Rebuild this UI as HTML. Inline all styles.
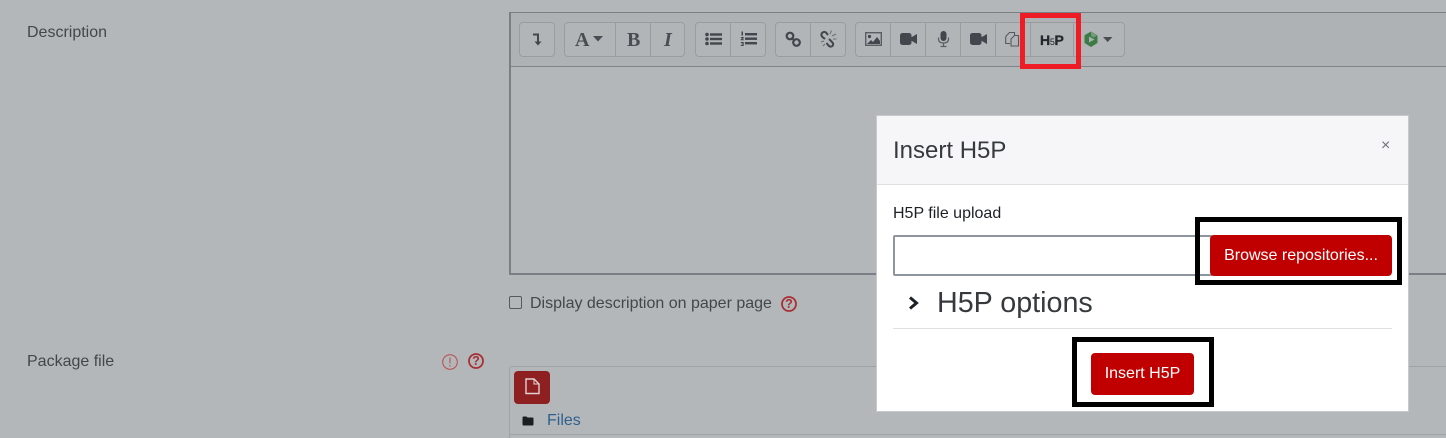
<!DOCTYPE html>
<html><head><meta charset="utf-8">
<style>
html,body{margin:0;padding:0;width:1446px;height:438px;overflow:hidden}
#w{position:relative;width:1446px;height:438px;overflow:hidden;background:#b3b7ba;font-family:"Liberation Sans",sans-serif;color:#3f4245;font-size:16px}
.a{position:absolute;box-sizing:border-box}
.t{position:absolute;white-space:nowrap;line-height:20px}
.g{position:absolute;top:22px;height:35px;box-sizing:border-box;border:1px solid #999da0;border-radius:4px;background:#b1b5b8}
.d{position:absolute;top:22px;width:1px;height:35px;background:#999da0}
svg{position:absolute;overflow:visible}
.btn{position:absolute;background:#c00000;color:#fff;border-radius:4px;text-align:center;box-sizing:border-box}
</style></head><body><div id="w">

<div class="t" style="left:27px;top:23px;color:#44474a">Description</div>
<div class="t" style="left:27px;top:352px;color:#44474a">Package file</div>

<!-- editor -->
<div class="a" style="left:509px;top:12px;width:940px;height:263px;border:1px solid #7a7e85;border-left:2px solid #7a7e85;border-bottom:2px solid #7a7e85;background:#b3b7ba"></div>
<div class="a" style="left:511px;top:13px;width:935px;height:54px;background:#aeb2b5;border-bottom:1px solid #7f838a"></div>

<div class="g" style="left:519px;width:36px"></div>
<div class="g" style="left:564px;width:121px"></div><div class="d" style="left:615px"></div><div class="d" style="left:650px"></div>
<div class="g" style="left:695px;width:71px"></div><div class="d" style="left:730px"></div>
<div class="g" style="left:775px;width:71px"></div><div class="d" style="left:810px"></div>
<div class="g" style="left:855px;width:270px"></div>
<div class="d" style="left:890px"></div><div class="d" style="left:925px"></div><div class="d" style="left:960px"></div><div class="d" style="left:995px"></div><div class="d" style="left:1030px"></div><div class="d" style="left:1073px"></div>

<!-- undent arrow -->
<svg style="left:530px;top:32px" width="14" height="15" viewBox="0 0 14 15"><path d="M3 2.500H8V11" fill="none" stroke="#43464d" stroke-width="2"/><path d="M4.500 9.500H11.500L8 13.500Z" fill="#43464d"/></svg>
<!-- A -->
<div class="t" style="left:575px;top:30px;font:bold 20px/20px 'Liberation Serif',serif;color:#4a4d53">A</div>
<svg style="left:593px;top:36px" width="11" height="6"><path d="M0 0H10L5 5.500Z" fill="#4a4d53"/></svg>
<div class="t" style="left:627px;top:30px;font:bold 20px/20px 'Liberation Serif',serif;color:#4a4d53">B</div>
<div class="t" style="left:664px;top:30px;font:italic bold 20px/20px 'Liberation Serif',serif;color:#4a4d53">I</div>
<!-- bullets -->
<svg style="left:705px;top:32px" width="17" height="14"><g fill="#43464d"><circle cx="2" cy="2.500" r="1.800"/><circle cx="2" cy="7" r="1.800"/><circle cx="2" cy="11.500" r="1.800"/><rect x="5" y="1.300" width="12" height="2.400"/><rect x="5" y="5.800" width="12" height="2.400"/><rect x="5" y="10.300" width="12" height="2.400"/></g></svg>
<!-- numbered -->
<svg style="left:740px;top:31px" width="17" height="16"><g fill="#43464d"><path d="M1.500 .5H3V4.500H1.500Z"/><path d="M.8 6H3.700V7.200L2.300 8.300H3.700V9.300H.8V8.200L2.300 7H.8Z"/><path d="M.8 11H3.700V15H.8V14H2.600V13.400H1.300V12.600H2.600V12H.8Z"/><rect x="5" y="2" width="12" height="2.400"/><rect x="5" y="6.500" width="12" height="2.400"/><rect x="5" y="11" width="12" height="2.400"/></g></svg>
<!-- link -->
<svg style="left:785px;top:31px" width="17" height="17"><g fill="none" stroke="#43464d" stroke-width="2.200"><circle cx="5" cy="5" r="3.300"/><circle cx="11.500" cy="11.500" r="3.300"/><path d="M6.500 6.500L10 10"/></g></svg>
<!-- unlink -->
<svg style="left:820px;top:30px" width="17" height="18"><g fill="none" stroke="#43464d" stroke-width="2"><path d="M8 5L6 2.500Q4 1 2 3Q0.500 5 2.500 7L5 9"/><path d="M9 9L12 12Q14 14 12.500 16Q10.500 17.500 8.500 15.500L6.500 13"/></g><path d="M10 4L11.500 0.500M12 6L16 4M13 9H16.500M1 12L4 11M3 16L5 14" stroke="#6b6e74" stroke-width="1" fill="none"/></svg>
<!-- image -->
<svg style="left:865px;top:32px" width="17" height="14"><rect x="0.700" y="0.700" width="15.600" height="12.600" fill="none" stroke="#5a5d63" stroke-width="1.400"/><circle cx="4.500" cy="4.500" r="1.600" fill="#43464d"/><path d="M2 12L6 8L8 10L12 5L15 9V12Z" fill="#43464d"/></svg>
<!-- video -->
<svg style="left:900px;top:32px" width="17" height="14"><rect x="0" y="1" width="11.500" height="12" rx="2.500" fill="#43464d"/><path d="M11 5.500L17 2V12L11 8.500Z" fill="#43464d"/></svg>
<!-- mic -->
<svg style="left:937px;top:30px" width="13" height="18"><rect x="3.500" y="1" width="6" height="10" rx="3" fill="#43464d"/><path d="M1.500 7.500V9Q1.500 13 6.500 13Q11.500 13 11.500 9V7.500M6.500 13V16M3.500 16.500H9.500" fill="none" stroke="#5a5d63" stroke-width="1.200"/></svg>
<!-- video -->
<svg style="left:970px;top:32px" width="17" height="14"><rect x="0" y="1" width="11.500" height="12" rx="2.500" fill="#43464d"/><path d="M11 5.500L17 2V12L11 8.500Z" fill="#43464d"/></svg>
<!-- copy -->
<svg style="left:1005px;top:31px" width="16" height="16"><path d="M.7 5.500L4.500 1.500H9.500V4.500M.7 5.500V12.500H5" fill="none" stroke="#55585e" stroke-width="1.100"/><path d="M6 8L9.500 4.500H13.500V15H6Z" fill="none" stroke="#55585e" stroke-width="1.100"/></svg>
<!-- H5P -->
<div class="t" style="left:1040px;top:30px;font:bold 14px/20px 'Liberation Sans',sans-serif;color:#24272c;letter-spacing:-.3px;-webkit-text-stroke:.3px #24272c">H<span style="font-size:9px;font-weight:normal;letter-spacing:-.3px;-webkit-text-stroke:0">5</span>P</div>
<!-- recycle logo -->
<svg style="left:1083px;top:31px" width="16" height="17" viewBox="0 0 16 17"><path d="M8 0.500L14.500 4.300V12L8 16L1.500 12V4.300Z" fill="#3c7a46"/><path d="M8 0.500L14.500 4.300L11 6.500L8 5Z" fill="#75997a"/><path d="M6 5.500L11.500 8.500L6 11.500Z" fill="#a9b0ae"/></svg>
<svg style="left:1103px;top:37px" width="10" height="6"><path d="M0 0H9.500L4.700 5Z" fill="#4a4d53"/></svg>

<!-- red box -->
<div class="a" style="left:1020px;top:13px;width:61px;height:56px;border:5px solid #ee1c25"></div>

<!-- checkbox row -->
<div class="a" style="left:509px;top:296px;width:13px;height:13px;border:1px solid #56595d;border-radius:2px"></div>
<div class="t" style="left:530px;top:294px;color:#44474a">Display description on paper page</div>
<svg style="left:781px;top:296px" width="16" height="16"><circle cx="8" cy="8" r="7" fill="none" stroke="#a83034" stroke-width="1.800"/></svg>
<div class="t" style="left:785px;top:294px;width:8px;text-align:center;color:#a83034;font:bold 12.500px/20px 'Liberation Sans',sans-serif">?</div>

<!-- package icons -->
<svg style="left:442px;top:354px" width="16" height="16"><circle cx="8" cy="8" r="7.300" fill="none" stroke="#b9494d" stroke-width="1"/><path d="M8 3.500V9.500M8 11V12.500" stroke="#b9494d" stroke-width="1"/></svg>
<svg style="left:468px;top:353px" width="16" height="16"><circle cx="8" cy="8" r="7" fill="none" stroke="#a83034" stroke-width="1.800"/></svg>
<div class="t" style="left:472px;top:351px;width:8px;text-align:center;color:#a83034;font:bold 12.500px/20px 'Liberation Sans',sans-serif">?</div>

<!-- file picker -->
<div class="a" style="left:509px;top:366px;width:940px;height:80px;border:1px solid #9fa3a6;border-radius:3px 0 0 0"></div>
<div class="a" style="left:510px;top:434px;width:936px;height:1px;background:#9fa3a6"></div>
<div class="a" style="left:514px;top:371px;width:36px;height:33px;background:#8f2022;border-radius:4px"></div>
<svg style="left:525px;top:378px" width="15" height="17"><path d="M1 1H9L14 6V15.500H1Z" fill="none" stroke="#e0d2d2" stroke-width="1.400"/><path d="M9 1V6H14" fill="none" stroke="#e0d2d2" stroke-width="1"/></svg>
<svg style="left:522px;top:416px" width="12" height="10"><path d="M0.500 1.500Q0.500 0.500 1.500 0.500H4.500L5.500 1.500H10.500Q11.500 1.500 11.500 2.500V8.500Q11.500 9.500 10.500 9.500H1.500Q0.500 9.500 0.500 8.500Z" fill="#1c1f22"/></svg>
<div class="t" style="left:547px;top:411px;color:#2f5f8c;font-size:16px">Files</div>

<!-- modal -->
<div class="a" style="left:876px;top:115px;width:533px;height:297px;background:#fff;border:1px solid #c7c9cc">
  <div class="a" style="left:0;top:0;width:531px;height:69px;background:#f6f6f9;border-bottom:1px solid #dee0e3"></div>
</div>
<div class="t" style="left:893px;top:139px;font-size:24px;line-height:24px;color:#373a3c">Insert H5P</div>
<div class="t" style="left:1381px;top:136px;color:#6d7074;font-size:16px">×</div>
<div class="t" style="left:893px;top:204px;color:#1d2125;font-size:16px">H5P file upload</div>
<div class="a" style="left:893px;top:235px;width:320px;height:41px;border:2px solid #8f959e;border-radius:2px;background:#fff"></div>
<div class="btn" style="left:1210px;top:235px;width:182px;height:41px;font-size:16px;line-height:42px">Browse repositories...</div>
<svg style="left:908px;top:296px" width="12" height="14"><path d="M2 1.500L8.500 7L2 12.500" fill="none" stroke="#1d2125" stroke-width="3"/></svg>
<div class="t" style="left:937px;top:285px;font-size:28.700px;line-height:36px;color:#373a3c">H5P options</div>
<div class="a" style="left:893px;top:328px;width:499px;height:1px;background:#dee0e3"></div>
<div class="btn" style="left:1091px;top:353px;width:103px;height:42px;font-size:16px;line-height:42px">Insert H5P</div>

<!-- black boxes -->
<div class="a" style="left:1195px;top:217px;width:207px;height:68px;border:5px solid #000"></div>
<div class="a" style="left:1072px;top:337px;width:142px;height:70px;border:5px solid #000"></div>
</div></body></html>
